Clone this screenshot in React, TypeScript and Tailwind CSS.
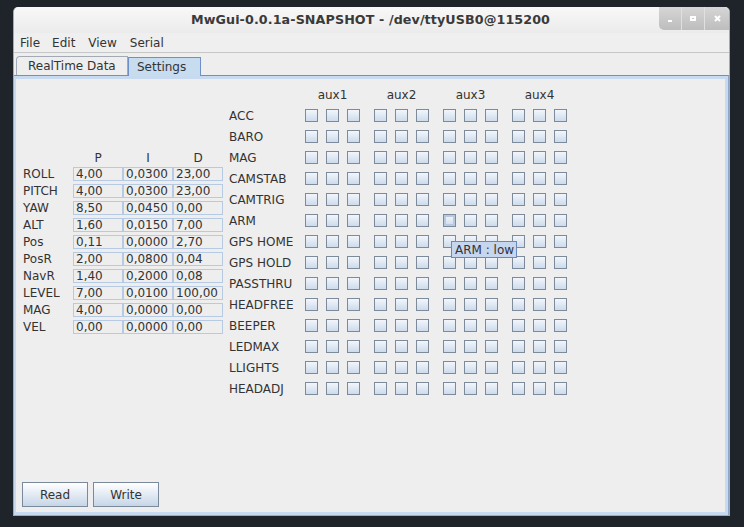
import React from "react";

const pid: [string, string, string, string][] = [
  ["ROLL", "4,00", "0,0300", "23,00"],
  ["PITCH", "4,00", "0,0300", "23,00"],
  ["YAW", "8,50", "0,0450", "0,00"],
  ["ALT", "1,60", "0,0150", "7,00"],
  ["Pos", "0,11", "0,0000", "2,70"],
  ["PosR", "2,00", "0,0800", "0,04"],
  ["NavR", "1,40", "0,2000", "0,08"],
  ["LEVEL", "7,00", "0,0100", "100,00"],
  ["MAG", "4,00", "0,0000", "0,00"],
  ["VEL", "0,00", "0,0000", "0,00"],
];

const boxes = [
  "ACC",
  "BARO",
  "MAG",
  "CAMSTAB",
  "CAMTRIG",
  "ARM",
  "GPS HOME",
  "GPS HOLD",
  "PASSTHRU",
  "HEADFREE",
  "BEEPER",
  "LEDMAX",
  "LLIGHTS",
  "HEADADJ",
];

function Cb({ pressed }: { pressed?: boolean }) {
  if (pressed) {
    return (
      <div className="w-[13px] h-[13px] border border-[#7d8a9a] bg-[#b8cae2] flex items-center justify-center">
        <div className="w-[7px] h-[7px] bg-gradient-to-b from-[#eef3f9] to-[#d4e0ee]" />
      </div>
    );
  }
  return <div className="w-[13px] h-[13px] border border-[#7d8a9a] bg-gradient-to-b from-[#f2f6fb] to-[#cddbec]" />;
}

function Field({ v }: { v: string }) {
  return (
    <div className="w-[50px] h-[14px] border border-[#b6cbe3] flex items-center pl-[2px] leading-none">
      {v}
    </div>
  );
}

export default function App() {
  return (
    <div className="w-[744px] h-[527px] bg-[#1f232a] relative overflow-hidden font-['DejaVu_Sans',sans-serif] text-[12px] text-[#333333]">
      <div className="absolute left-[13px] top-[7px] w-[717px] h-[509px] flex flex-col bg-[#eeeeee] rounded-t-[5px] border border-[#a6aab0] border-t-0">
        {/* Title bar */}
        <div className="h-[26px] flex items-center justify-center relative rounded-t-[5px] bg-gradient-to-b from-[#f8f8f8] to-[#ebebeb]">
          <span className="font-bold text-[12.7px] text-[#3a3a3a] pr-[2px] tracking-[0.1px]">MwGui-0.0.1a-SNAPSHOT - /dev/ttyUSB0@115200</span>
          <div className="absolute right-[0px] top-0 h-[23px] flex rounded-bl-[5px] rounded-tr-[5px] overflow-hidden bg-gradient-to-b from-[#d6d6d6] to-[#bdbdbd]">
            <div className="w-[23px] h-full flex items-center justify-center border-r border-[#e0e0e0]">
              <div className="w-[4px] h-[2px] bg-white mt-[5px]" />
            </div>
            <div className="w-[23px] h-full flex items-center justify-center border-r border-[#e0e0e0]">
              <div className="w-[6px] h-[5px] border-2 border-white" />
            </div>
            <div className="w-[24px] h-full flex items-center justify-center">
              <svg width="7" height="7" viewBox="0 0 7 7">
                <path d="M1 1 L6 6 M6 1 L1 6" stroke="white" strokeWidth="2" />
              </svg>
            </div>
          </div>
        </div>
        {/* Menu bar */}
        <div className="h-[20px] flex items-center gap-[13px] pl-[6px] bg-[#efefef] border-b border-[#c6c6c6]">
          <span>File</span>
          <span className="-ml-[1px]">Edit</span>
          <span>View</span>
          <span>Serial</span>
        </div>
        {/* Tabs */}
        <div className="h-[22px] flex items-end pl-[2px] pt-[3px]">
          <div className="h-[19px] w-[112px] flex items-center pl-[11px] border border-b-0 border-[#a2aab6] rounded-tl-[4px] bg-[#eeeeee]">
            RealTime Data
          </div>
          <div className="h-[19px] w-[73px] flex items-center pl-[8px] border border-b-0 border-[#6f8fc8] bg-[#c8dcf0] relative z-10 -mb-px">
            Settings
          </div>
        </div>
        {/* Content panel */}
        <div className="flex-1 flex flex-col border-t border-[#6f8fc8] border-r border-r-[#8fa6c8]">
          <div className="flex-1 flex flex-col border-t-[3px] border-l-[2px] border-r-[3px] border-b-[3px] border-[#c8daf0] relative">
            <div className="flex pl-[7px] pt-[6px]">
              {/* PID table */}
              <div className="flex flex-col mt-[63px] w-[200px]">
                <div className="h-[19px] flex items-center">
                  <div className="w-[50px]" />
                  <div className="w-[50px] text-center">P</div>
                  <div className="w-[50px] text-center">I</div>
                  <div className="w-[50px] text-center">D</div>
                </div>
                <div className="flex flex-col gap-[3px]">
                  {pid.map(([n, p, i, d]) => (
                    <div key={n} className="flex items-center h-[14px]">
                      <div className="w-[50px] leading-none">{n}</div>
                      <Field v={p} />
                      <Field v={i} />
                      <Field v={d} />
                    </div>
                  ))}
                </div>
              </div>
              {/* Checkbox grid */}
              <div className="flex flex-col ml-[6px]">
                <div className="h-[20px] flex items-center">
                  <div className="w-[76px]" />
                  <div className="flex gap-[14px]">
                    {["aux1", "aux2", "aux3", "aux4"].map((a) => (
                      <div key={a} className="w-[55px] text-center">{a}</div>
                    ))}
                  </div>
                </div>
                {boxes.map((b) => (
                  <div key={b} className="h-[21px] flex items-center">
                    <div className="w-[76px]">{b}</div>
                    <div className="flex gap-[14px]">
                      {[0, 1, 2, 3].map((g) => (
                        <div key={g} className="flex gap-[8px]">
                          {[0, 1, 2].map((k) => (
                            <Cb key={k} pressed={b === "ARM" && g === 2 && k === 0} />
                          ))}
                        </div>
                      ))}
                    </div>
                  </div>
                ))}
              </div>
            </div>
            <div className="flex-1" />
            <div className="flex gap-[5px] pl-[6px] pb-[5px]">
              <div className="w-[66px] h-[25px] border border-[#7a8a9a] bg-gradient-to-b from-white to-[#c6d6e8] flex items-center justify-center">Read</div>
              <div className="w-[66px] h-[25px] border border-[#7a8a9a] bg-gradient-to-b from-white to-[#c6d6e8] flex items-center justify-center">Write</div>
            </div>
          </div>
        </div>
      </div>
      {/* Tooltip */}
      <div className="absolute left-[451px] top-[241px] w-[66px] h-[17px] border border-[#6a88c0] bg-[#c6d6ee] flex items-center pl-[3px]">
        ARM : low
      </div>
    </div>
  );
}
